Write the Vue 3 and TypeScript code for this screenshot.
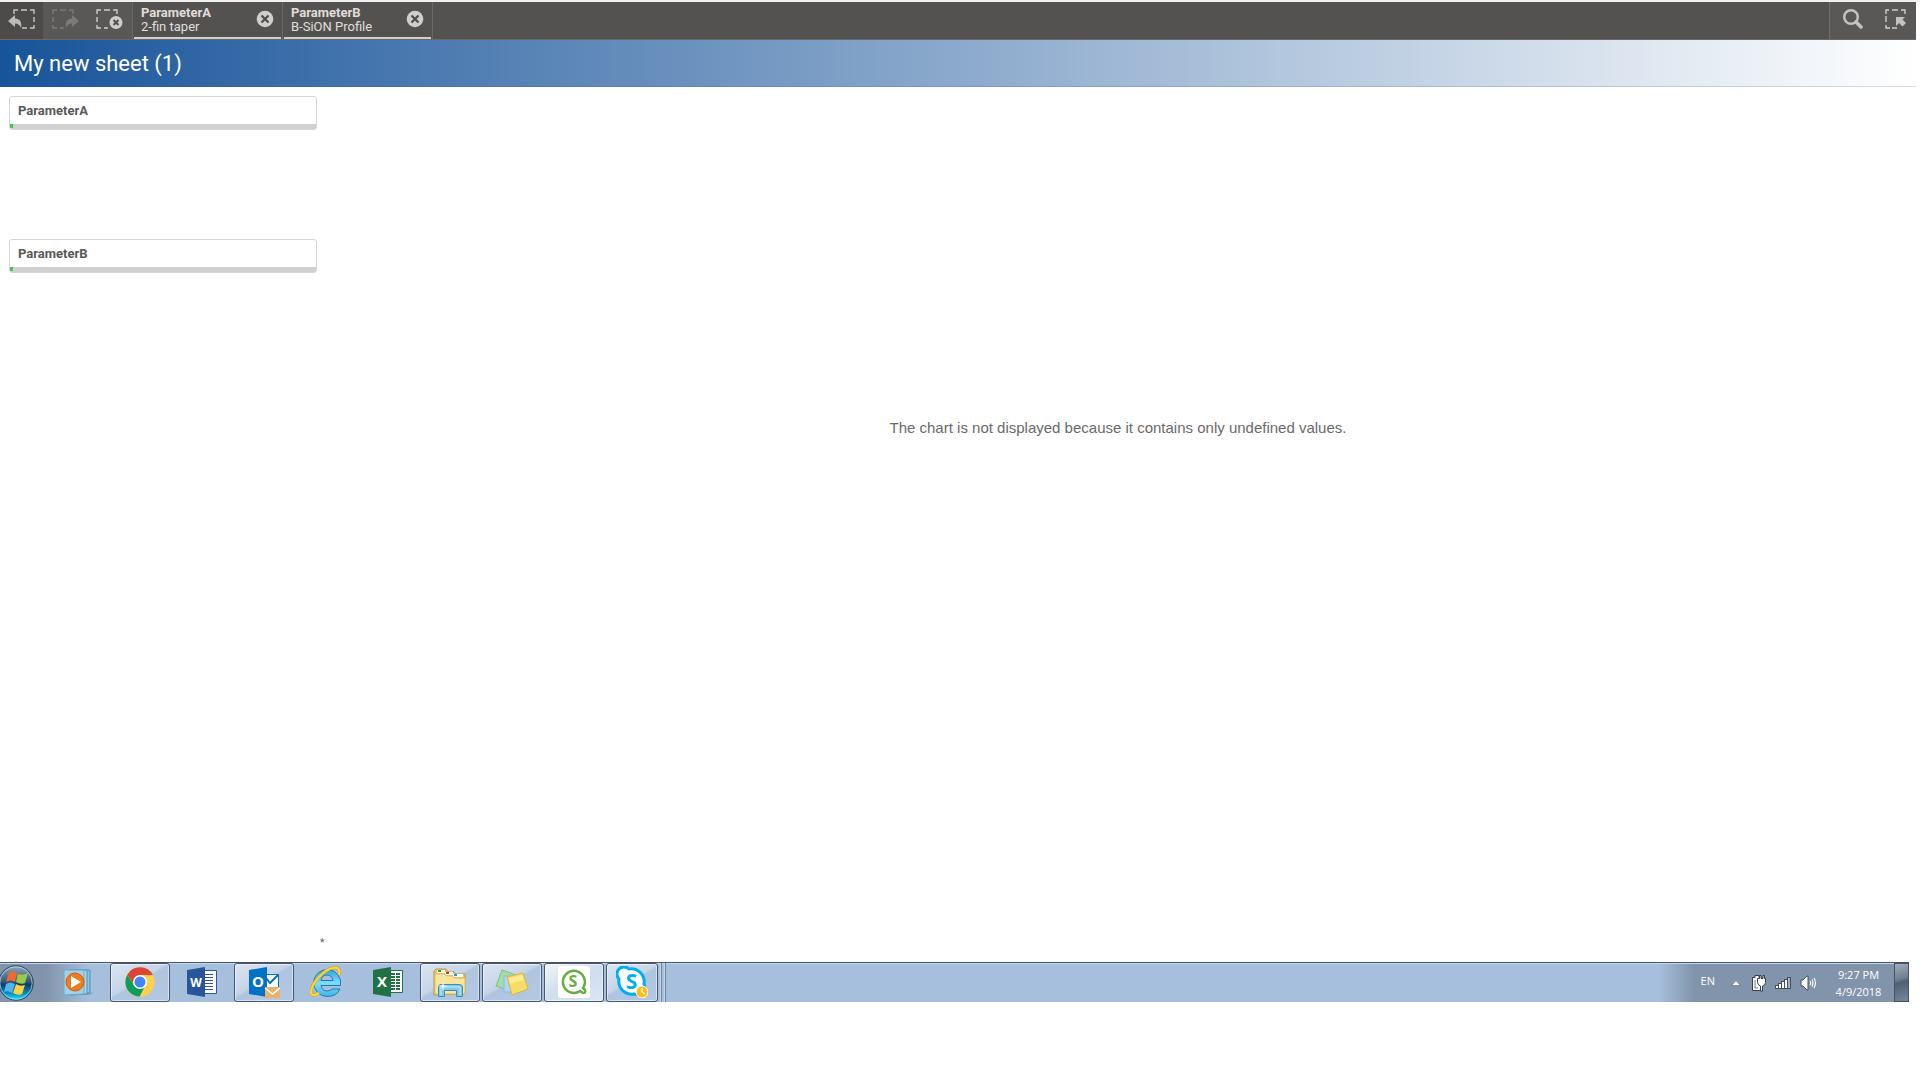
<script setup lang="ts">
interface Selection {
  field: string
  value: string
}

interface TaskItem {
  id: string
  label: string
  open: boolean
}

const selections: Selection[] = [
  { field: 'ParameterA', value: '2-fin taper' },
  { field: 'ParameterB', value: 'B-SiON Profile' },
]

const tasks: TaskItem[] = [
  { id: 'media', label: 'Media Player', open: false },
  { id: 'chrome', label: 'Chrome', open: true },
  { id: 'word', label: 'Word', open: false },
  { id: 'outlook', label: 'Outlook', open: true },
  { id: 'ie', label: 'Internet Explorer', open: false },
  { id: 'excel', label: 'Excel', open: false },
  { id: 'explorer', label: 'File Explorer', open: true },
  { id: 'notes', label: 'Sticky Notes', open: true },
  { id: 'qlik', label: 'Qlik Sense', open: true },
  { id: 'skype', label: 'Skype', open: true },
]
</script>

<template>
  <div class="page">
    <header class="toolbar">
      <button class="tool back" aria-label="Step back">
        <svg width="28" height="22" viewBox="0 0 28 22">
          <path d="M6 6V2H10M13 2H19M22 2H26V6M26 9V14M26 17V20H22M19 20H14" fill="none" stroke="#c6c4c1" stroke-width="1.400" />
          <path d="M0 13L7 7V10.500C12 10.500 14 14 13 20C12 17 10 15.500 7 15.500V19Z" fill="#bdbbb8" />
        </svg>
      </button>
      <button class="tool dim" aria-label="Step forward" disabled>
        <svg width="28" height="22" viewBox="0 0 28 22">
          <path d="M2 6V2H6M9 2H15M18 2H22V6M2 9V14M2 17V20H6M9 20H13" fill="none" stroke="#7b7a77" stroke-width="1.400" />
          <path d="M28 13L21 7V10.500C16 10.500 14 14 15 20C16 17 18 15.500 21 15.500V19Z" fill="#7b7a77" />
        </svg>
      </button>
      <button class="tool clear" aria-label="Clear all selections">
        <svg width="28" height="22" viewBox="0 0 28 22">
          <path d="M1 6V2H5M8 2H14M17 2H21V6M1 9V14M1 17V20H5M8 20H12" fill="none" stroke="#d0cecb" stroke-width="1.400" />
          <circle cx="20" cy="14.500" r="6.500" fill="#d0cecb" />
          <path d="M17.500 12L22.500 17M22.500 12L17.500 17" stroke="#504f4d" stroke-width="2" />
        </svg>
      </button>
      <div v-for="s in selections" :key="s.field" class="selection">
        <div class="selection-text">
          <strong>{{ s.field }}</strong>
          <span>{{ s.value }}</span>
        </div>
        <button class="remove" :aria-label="`Clear ${s.field}`">
          <svg width="18" height="18" viewBox="0 0 18 18">
            <circle cx="9" cy="9" r="8.300" fill="#d0cecb" />
            <path d="M5.500 5.500L12.500 12.500M12.500 5.500L5.500 12.500" stroke="#4d4c4a" stroke-width="2.200" />
          </svg>
        </button>
      </div>
      <div class="spacer"></div>
      <div class="tools-right">
        <button class="tool" aria-label="Search">
          <svg width="22" height="22" viewBox="0 0 22 22">
            <circle cx="10" cy="9" r="6.800" fill="none" stroke="#c4c2bf" stroke-width="2.500" />
            <path d="M15 14L20 19" stroke="#c4c2bf" stroke-width="3.600" stroke-linecap="round" />
          </svg>
        </button>
        <button class="tool" aria-label="Selections tool">
          <svg width="24" height="22" viewBox="0 0 24 22">
            <path d="M3 6V2H6M9 2H15M18 2H22V6M3 8V14M3 17V20H7M9 20H14" fill="none" stroke="#d0cecb" stroke-width="1.400" />
            <path d="M13 9H22L19.500 11.500L23 15L19.500 18.500L16 15L13 18Z" fill="#c4c2bf" />
          </svg>
        </button>
      </div>
    </header>

    <h1 class="sheet-title">My new sheet (1)</h1>

    <main class="sheet">
      <aside class="filters">
        <section v-for="s in selections" :key="s.field" class="filter">
          <h2>{{ s.field }}</h2>
          <div class="state"><i></i></div>
        </section>
      </aside>
      <div class="content">
        <p class="message">The chart is not displayed because it contains only undefined values.</p>
        <p class="note">*</p>
      </div>
    </main>

    <footer class="taskbar">
      <button class="start" aria-label="Start">
        <svg width="36" height="38" viewBox="0 0 36 38">
          <defs>
            <linearGradient id="orb" x1="0" y1="0" x2="0" y2="1">
              <stop offset="0" stop-color="#8fa9bd" />
              <stop offset="0.450" stop-color="#375a78" />
              <stop offset="0.550" stop-color="#0b3e68" />
              <stop offset="0.800" stop-color="#078fc0" />
              <stop offset="1" stop-color="#20e4ff" />
            </linearGradient>
          </defs>
          <circle cx="16" cy="19" r="17.300" fill="url(#orb)" stroke="#2d4c69" />
          <circle cx="16" cy="19" r="16.200" fill="none" stroke="#c3dbe9" stroke-opacity="0.700" />
          <path d="M9 9Q13 6 17 9L15 18Q10 15 6 18Z" fill="#f16a2b" />
          <path d="M18 10Q23 12 28 9L25 19Q21 21 16 18Z" fill="#9acb46" />
          <path d="M6 20Q10 17 15 20L12 29Q8 26 4 28Z" fill="#51b5ef" />
          <path d="M16 20Q20 23 25 21L22 30Q18 32 13 29Z" fill="#ffd13e" />
        </svg>
      </button>
      <button v-for="t in tasks" :key="t.id" class="task" :class="[t.id, { open: t.open }]" :aria-label="t.label">
        <svg v-if="t.id === 'media'" width="32" height="32" viewBox="0 0 32 32">
          <path d="M24 26L32 27L27 29H8Z" fill="#768fa9" opacity="0.500" />
          <path d="M12 4H28V27L12 28Z" fill="#8cc4df" stroke="#4e91b5" />
          <path d="M8 4H25V28L8 29Z" fill="#a9d8ec" stroke="#4e91b5" />
          <path d="M2 4H22V28L2 29Z" fill="#9ed3ea" stroke="#69a9c8" />
          <circle cx="13" cy="16" r="9" fill="#f17a1c" stroke="#d85b0e" />
          <path d="M9 10L19 16L9 22Z" fill="#fff" />
        </svg>
        <svg v-else-if="t.id === 'chrome'" width="32" height="32" viewBox="0 0 32 32">
          <circle cx="16" cy="16" r="14.700" fill="#fdd04e" />
          <path d="M16 9H29A14.700 14.700 0 0 0 3.300 8.700L10 19Z" fill="#dc4437" />
          <path d="M3.300 8.700L10 19.500L16 22.500L20.500 21L15.500 30.700A14.700 14.700 0 0 1 3.300 8.700Z" fill="#109d59" />
          <circle cx="16" cy="16" r="7" fill="#fff" />
          <circle cx="16" cy="16" r="5.500" fill="#4285f4" />
        </svg>
        <svg v-else-if="t.id === 'word'" width="32" height="32" viewBox="0 0 32 32">
          <path d="M17 4.500H30.500V27.500H17Z" fill="#fff" stroke="#2a5699" />
          <path d="M19 8.500H27M19 11.500H27M19 14.500H27M19 17.500H27M19 20.500H27M19 23.500H27" stroke="#2a5699" />
          <path d="M1 4L19 1V31L1 28Z" fill="#2a5699" />
          <text x="10" y="21" text-anchor="middle" class="glyph word-glyph">W</text>
        </svg>
        <svg v-else-if="t.id === 'outlook'" width="32" height="32" viewBox="0 0 32 32">
          <path d="M17 8.500H30.500V23H17Z" fill="#fff" stroke="#0072c6" />
          <path d="M18 12L22 17L30 9" fill="none" stroke="#0072c6" stroke-width="2" />
          <path d="M1 4L19 1V31L1 28Z" fill="#0072c6" />
          <text x="10" y="21" text-anchor="middle" class="glyph">O</text>
          <path d="M17 21H32V32H17Z" fill="#e8b16c" />
          <path d="M17 22L24.500 28L32 22" fill="none" stroke="#fff" stroke-width="1.500" />
        </svg>
        <svg v-else-if="t.id === 'ie'" width="32" height="32" viewBox="0 0 32 32">
          <defs>
            <linearGradient id="ie-blue" x1="0" y1="0" x2="0" y2="1">
              <stop offset="0" stop-color="#2fa3de" />
              <stop offset="0.500" stop-color="#7fdcfb" />
              <stop offset="1" stop-color="#3eb4e8" />
            </linearGradient>
          </defs>
          <path d="M30.500 19.500H11Q12 25 17 25Q20.500 25 22 23H30Q27 30.500 17 30.500A13.500 13.500 0 1 1 30.500 19.500ZM11 14.500H23Q22 9 17 9Q12 9 11 14.500Z" fill="url(#ie-blue)" stroke="#1a7fb8" />
          <path d="M9 27C-2 34 -1 22 9 11S32 -2 29 9" fill="none" stroke="#d29b13" stroke-width="3.200" />
          <path d="M9 27C-2 34 -1 22 9 11S32 -2 29 9" fill="none" stroke="#ffd735" stroke-width="2.200" />
        </svg>
        <svg v-else-if="t.id === 'excel'" width="32" height="32" viewBox="0 0 32 32">
          <path d="M17 4.500H30.500V26.500H17Z" fill="#fff" stroke="#207245" />
          <path d="M19 7H23V9H19ZM24 7H28V9H24ZM19 10H23V12H19ZM24 10H28V12H24ZM19 13H23V15H19ZM24 13H28V15H24ZM19 16H23V18H19ZM24 16H28V18H24ZM19 19H23V21H19ZM24 19H28V21H24ZM19 22H23V24H19ZM24 22H28V24H24Z" fill="#207245" />
          <path d="M1 4L19 1V31L1 28Z" fill="#207245" />
          <text x="10" y="21" text-anchor="middle" class="glyph">X</text>
        </svg>
        <svg v-else-if="t.id === 'explorer'" width="34" height="32" viewBox="0 0 34 32">
          <path d="M1 29V5L3 3H13L15 6H21L23 8H32V28Z" fill="#e7c76b" stroke="#bd9840" />
          <path d="M4 4H12V7H4Z" fill="#fff" />
          <path d="M5 4H8V6H5Z" fill="#18b535" />
          <path d="M12 6H20V9H12Z" fill="#fff" />
          <path d="M13 6H16V8H13Z" fill="#d83a25" />
          <path d="M20 8H30V11H20Z" fill="#fff" />
          <path d="M21 8H24V10H21Z" fill="#249be0" />
          <path d="M2 8H11L14 10H19L21 12H32V28H2Z" fill="#f8e69e" stroke="#dfbd62" />
          <path d="M5.500 30.500V21Q5.500 18.500 8 18.500H26Q29.500 18.500 29.500 21V30.500H23.500V24.500H11.500V30.500Z" fill="#83caea" stroke="#398db7" />
          <path d="M8 29V21H27V29" fill="none" stroke="#c6edfa" />
          <path d="M10 15L10.700 19.300L15 20L10.700 20.700L10 25L9.300 20.700L5 20L9.300 19.300Z" fill="#fff" />
        </svg>
        <svg v-else-if="t.id === 'notes'" width="34" height="32" viewBox="0 0 34 32">
          <path d="M7 4L21 9L15 25L1 20Z" fill="#a8dba1" stroke="#80c08b" />
          <path d="M9 10H23V26H9Z" fill="#aed5fa" stroke="#89b9ec" />
          <path d="M12 11L28 7L33 23L17 29Z" fill="#f7dc65" stroke="#d8b83e" />
          <path d="M14 12L27 9L29 14L15 18Z" fill="#ffeb91" />
        </svg>
        <svg v-else-if="t.id === 'qlik'" width="32" height="32" viewBox="0 0 32 32">
          <rect width="32" height="32" rx="3" fill="#fff" />
          <path d="M22 25A11 11 0 1 1 25 22L27 24Q28 27 25 27Z" fill="none" stroke="#68ad45" stroke-width="2.500" />
          <text x="15" y="21" text-anchor="middle" class="glyph qlik-glyph">S</text>
        </svg>
        <svg v-else width="32" height="32" viewBox="0 0 32 32">
          <path d="M3 13A7 7 0 0 1 13 3A13 13 0 0 1 28 18A8 8 0 0 1 18 28A13 13 0 0 1 3 13Z" fill="#fff" stroke="#00aff0" stroke-width="3" />
          <text x="15.500" y="23" text-anchor="middle" class="glyph skype-glyph">S</text>
          <circle cx="26" cy="26" r="6" fill="#fdbd16" stroke="#fff" />
          <path d="M26 22V26L29 28" fill="none" stroke="#fff" stroke-width="1.300" />
        </svg>
      </button>
      <span class="stack"></span>
      <span class="stack"></span>
      <div class="spacer"></div>
      <div class="tray">
        <span class="lang">EN</span>
        <button class="caret" aria-label="Show hidden icons">
          <svg width="10" height="6" viewBox="0 0 10 6"><path d="M0.500 5.500L5 0.500L9.500 5.500Z" fill="#fff" stroke="#505d73" stroke-width="0.600" /></svg>
        </button>
        <button aria-label="Power">
          <svg width="16" height="18" viewBox="0 0 16 18">
            <path d="M1.500 3.500H4V1.500H8V3.500H10V16.500H1.500Z" fill="#fff" stroke="#343d4b" />
            <path d="M4 6V14H7" fill="none" stroke="#6d7888" />
            <path d="M8.500 1.500V4.500H6.500V8.500Q7 11.500 9.500 12V17H11.500V12Q14.500 11 14.500 8.500V4.500H13.500V1.500H12V4.500H10V1.500Z" fill="#fff" stroke="#343d4b" />
          </svg>
        </button>
        <button aria-label="Network">
          <svg width="17" height="14" viewBox="0 0 17 14">
            <path d="M0 9H3V7H6V5H9V3H12V1H16V13H0Z" fill="#414d60" />
            <path d="M1 10H3V12H1ZM4 8H6V12H4ZM7 6H9V12H7ZM10 4H12V12H10Z" fill="#fff" />
            <path d="M13 2H15V12H13Z" fill="#a8b2c0" />
          </svg>
        </button>
        <button aria-label="Volume">
          <svg width="17" height="16" viewBox="0 0 17 16">
            <path d="M1 5H3L7 1H8V15H7L3 11H1Z" fill="#fff" stroke="#414d60" />
            <path d="M10 6Q11.500 8 10 10M12 4.500Q14 8 12 11.500M14 3Q17 8 14 13" fill="none" stroke="#fff" stroke-width="1.100" />
          </svg>
        </button>
        <div class="clock"><time>9:27 PM</time><time>4/9/2018</time></div>
      </div>
      <button class="desktop" aria-label="Show desktop"></button>
    </footer>
  </div>
</template>

<style>
body {
  background: #fff;
}
</style>

<style scoped>
* {
  box-sizing: border-box;
}
.page {
  display: flex;
  flex-direction: column;
  min-height: 100vh;
  padding: 0 4px 78px 0;
  border-top: 2px solid #f1f1f1;
  font-family: Roboto, "Liberation Sans", sans-serif;
  color: #595959;
}
h1, h2, p {
  margin: 0;
}
button {
  display: flex;
  align-items: center;
  justify-content: center;
  padding: 0;
  border: 0;
  background: none;
  font: inherit;
}
svg {
  display: block;
  flex: none;
}
.spacer {
  flex: 1;
}
.toolbar {
  display: flex;
  height: 38px;
  background: #535250;
  border-bottom: 1px solid #6b6966;
}
.tool {
  width: 44px;
  padding-bottom: 3px;
  background: #595856;
}
.tool.back {
  width: 43px;
  background: #4c4b49;
}
.tool.clear {
  width: 45px;
}
.selection {
  display: flex;
  width: 150px;
  padding: 0 8px 3px 0;
  border-left: 1px solid #6a6866;
  background: linear-gradient(90deg, #d2d0cd, #d2d0cd) 1px 100% / 147px 2px no-repeat;
  align-items: center;
}
.selection-text {
  display: flex;
  flex: 1;
  flex-direction: column;
  padding: 2px 0 0 8px;
  font-size: 13px;
  line-height: 14px;
  color: #e0dedb;
}
.remove {
  width: 18px;
  height: 18px;
}
.toolbar > .spacer {
  border-left: 1px solid #6a6866;
}
.tools-right {
  display: flex;
  border-left: 1px solid #71706d;
}
.tools-right .tool {
  width: 43px;
}
.sheet-title {
  height: 47px;
  padding-left: 14px;
  border-bottom: 1px solid rgba(60, 80, 110, 0.2);
  background: linear-gradient(90deg, #18549a, #fff);
  color: #fff;
  font-size: 22px;
  font-weight: 400;
  line-height: 47px;
}
.sheet {
  display: flex;
  flex: 1;
}
.filters {
  display: flex;
  flex-direction: column;
  gap: 109px;
  width: 320px;
  padding: 9px 3px 0 9px;
}
.filter {
  height: 34px;
  border: 1px solid #d6d6d6;
  border-radius: 3px;
  overflow: hidden;
}
.filter h2 {
  height: 27px;
  padding-left: 8px;
  font-size: 13px;
  line-height: 28px;
}
.state {
  height: 5px;
  background: #d0d0d0;
}
.state i {
  display: block;
  width: 3px;
  height: 4px;
  background: #45c452;
}
.content {
  display: flex;
  flex: 1;
  flex-direction: column;
}
.message {
  display: flex;
  flex: 4;
  align-items: center;
  justify-content: center;
  padding-bottom: 12px;
  font-family: "Liberation Sans", sans-serif;
  font-size: 15px;
  color: #6a6a6a;
}
.note {
  display: flex;
  flex: 1;
  align-items: flex-end;
  padding-bottom: 12px;
  font-size: 10px;
  line-height: 14px;
}
.taskbar {
  display: flex;
  gap: 2px;
  height: 40px;
  margin-right: 7px;
  border-top: 1px solid #465365;
  box-shadow: inset 0 1px #c8d8ea;
  background: linear-gradient(90deg, #8294ab 0, #8294ab 46px, #a6bfdc 88px, #a6bfdc calc(100% - 250px), #8294ab calc(100% - 215px));
}
.start {
  width: 46px;
  justify-content: flex-start;
}
.task {
  width: 60px;
  padding-bottom: 2px;
}
.task.open {
  border: 1px solid #46566e;
  border-radius: 3px;
  background: linear-gradient(150deg, #dce6f2 0%, #c5d4e8 45%, #afc4df 50%, #b4c8e2 100%);
  box-shadow: inset 0 0 0 1px rgba(255, 255, 255, 0.5);
}
.task.qlik {
  background: linear-gradient(150deg, #f0f4f9, #cfdded 50%, #dbe6f2);
}
.task.skype {
  width: 52px;
}
.stack {
  width: 2px;
  border-right: 1px solid #71839d;
  box-shadow: inset -1px 0 #c7d7e9;
}
.glyph {
  fill: #fff;
  font: 700 15px "Open Sans", sans-serif;
}
.word-glyph {
  font-size: 12px;
}
.qlik-glyph {
  fill: #68ad45;
  font-size: 16px;
}
.skype-glyph {
  fill: #00aff0;
  font-size: 21px;
}
.tray {
  display: flex;
  align-items: center;
  gap: 8px;
  color: #fff;
  font: 11px/17px "Open Sans", sans-serif;
}
.lang {
  padding: 0 8px 4px 0;
}
.clock {
  display: flex;
  flex-direction: column;
  align-items: center;
  width: 67px;
}
.caret {
  margin-right: 2px;
}
.desktop {
  width: 15px;
  border: 1px solid #465365;
  background: linear-gradient(165deg, #a3adb9, #6f7f92 40%, #4f6076 50%, #75869b);
}
</style>
